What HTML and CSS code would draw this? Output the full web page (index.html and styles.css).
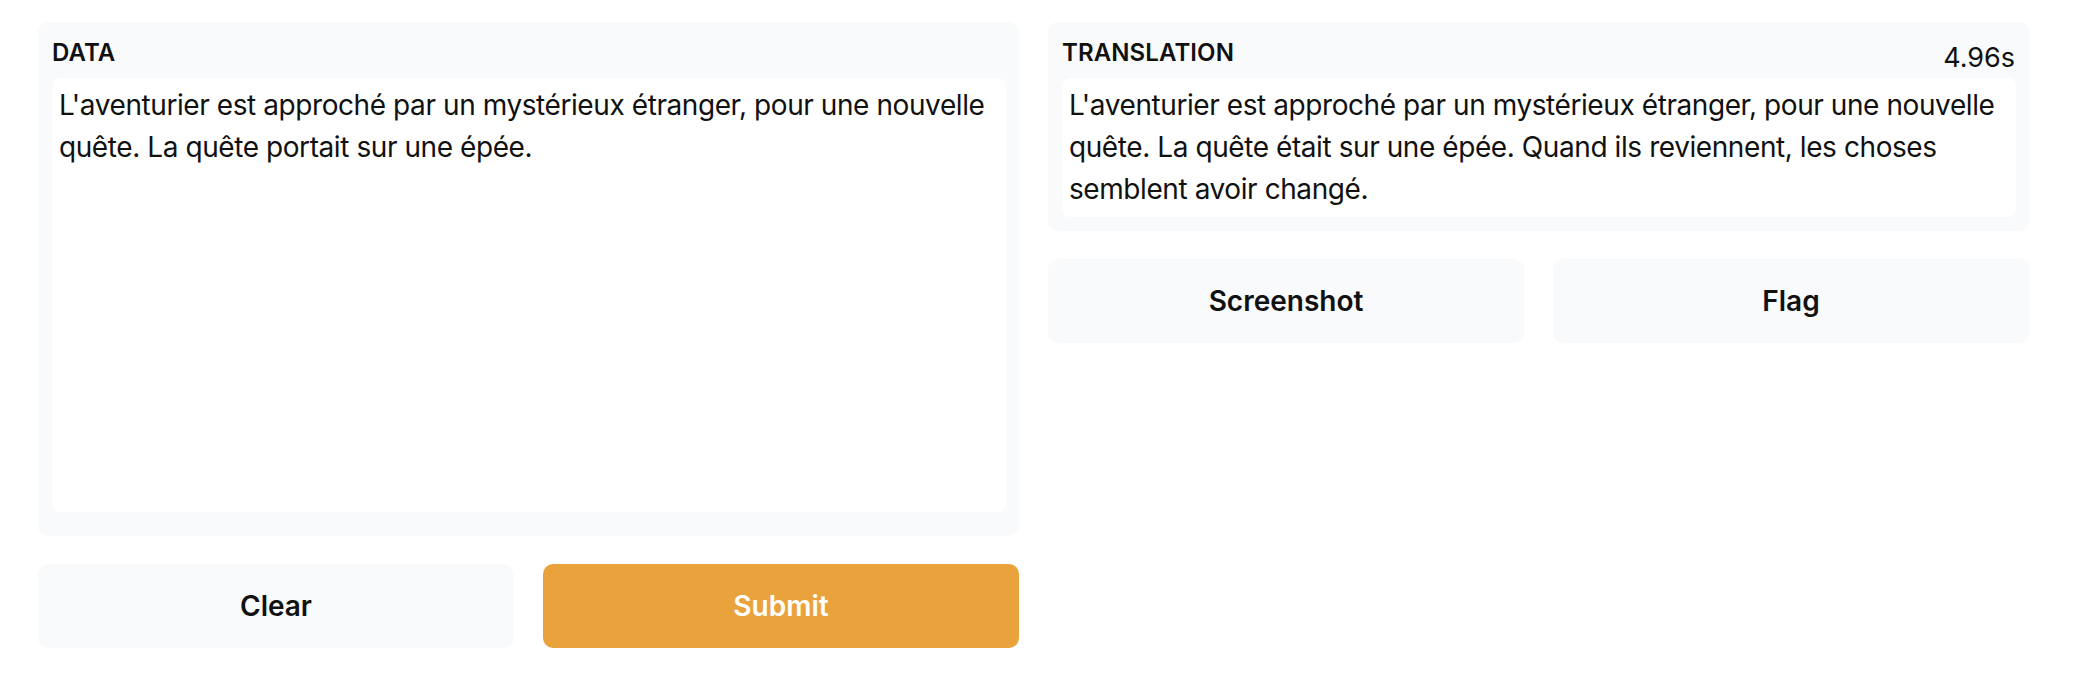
FILE: index.html
```html
<!DOCTYPE html>
<html lang="fr">
<head>
<meta charset="utf-8">
<title>Translation</title>
<link rel="stylesheet" href="styles.css">
</head>
<body>
<div class="app">
  <div class="col">
    <div class="panel panel-input">
      <div class="label">DATA</div>
      <div class="box box-input">L'aventurier est approché par un mystérieux étranger, pour une nouvelle quête. La quête portait sur une épée.</div>
    </div>
    <div class="btn-row">
      <button class="btn">Clear</button>
      <button class="btn btn-primary">Submit</button>
    </div>
  </div>
  <div class="col">
    <div class="panel">
      <div class="label">TRANSLATION</div>
      <div class="timer">4.96s</div>
      <div class="box">L'aventurier est approché par un mystérieux étranger, pour une nouvelle quête. La quête était sur une épée. Quand ils reviennent, les choses semblent avoir changé.</div>
    </div>
    <div class="btn-row">
      <button class="btn">Screenshot</button>
      <button class="btn">Flag</button>
    </div>
  </div>
</div>
</body>
</html>
```

FILE: styles.css
```css
html, body {
  margin: 0;
  padding: 0;
  background: #ffffff;
}

body {
  font-family: Inter, "Noto Sans", "Liberation Sans", sans-serif;
  color: #111111;
}

.app {
  display: grid;
  grid-template-columns: 981px 981px;
  column-gap: 29px;
  padding: 22px 47px 0 38px;
  align-items: start;
}

.col {
  display: flex;
  flex-direction: column;
  gap: 28px;
}

.panel {
  position: relative;
  background: #f9fafb;
  border-radius: 10px;
  padding: 15px 13px 14px 14px;
}

.panel-input {
  padding-bottom: 24px;
}

.label {
  font-size: 24px;
  line-height: 32px;
  font-weight: 600;
  color: #111111;
  letter-spacing: 0.1px;
  margin-bottom: 9px;
}

.timer {
  position: absolute;
  top: 20px;
  right: 14px;
  font-size: 27px;
  line-height: 32px;
  color: #111111;
}

.box {
  background: #ffffff;
  border-radius: 8px;
  padding: 6px 8px 7px 7px;
  font-size: 28px;
  line-height: 42px;
  letter-spacing: -0.42px;
  color: #111111;
}

.box-input {
  height: 434px;
  box-sizing: border-box;
}

.btn-row {
  display: grid;
  grid-template-columns: 1fr 1fr;
  column-gap: 29px;
}

.btn {
  height: 84px;
  border: none;
  border-radius: 10px;
  background: #f9fafb;
  font-family: Inter, "Noto Sans", "Liberation Sans", sans-serif;
  font-size: 28px;
  font-weight: 600;
  color: #111111;
  padding: 0;
}

.btn-primary {
  background: #eaa23c;
  color: #ffffff;
}
```
